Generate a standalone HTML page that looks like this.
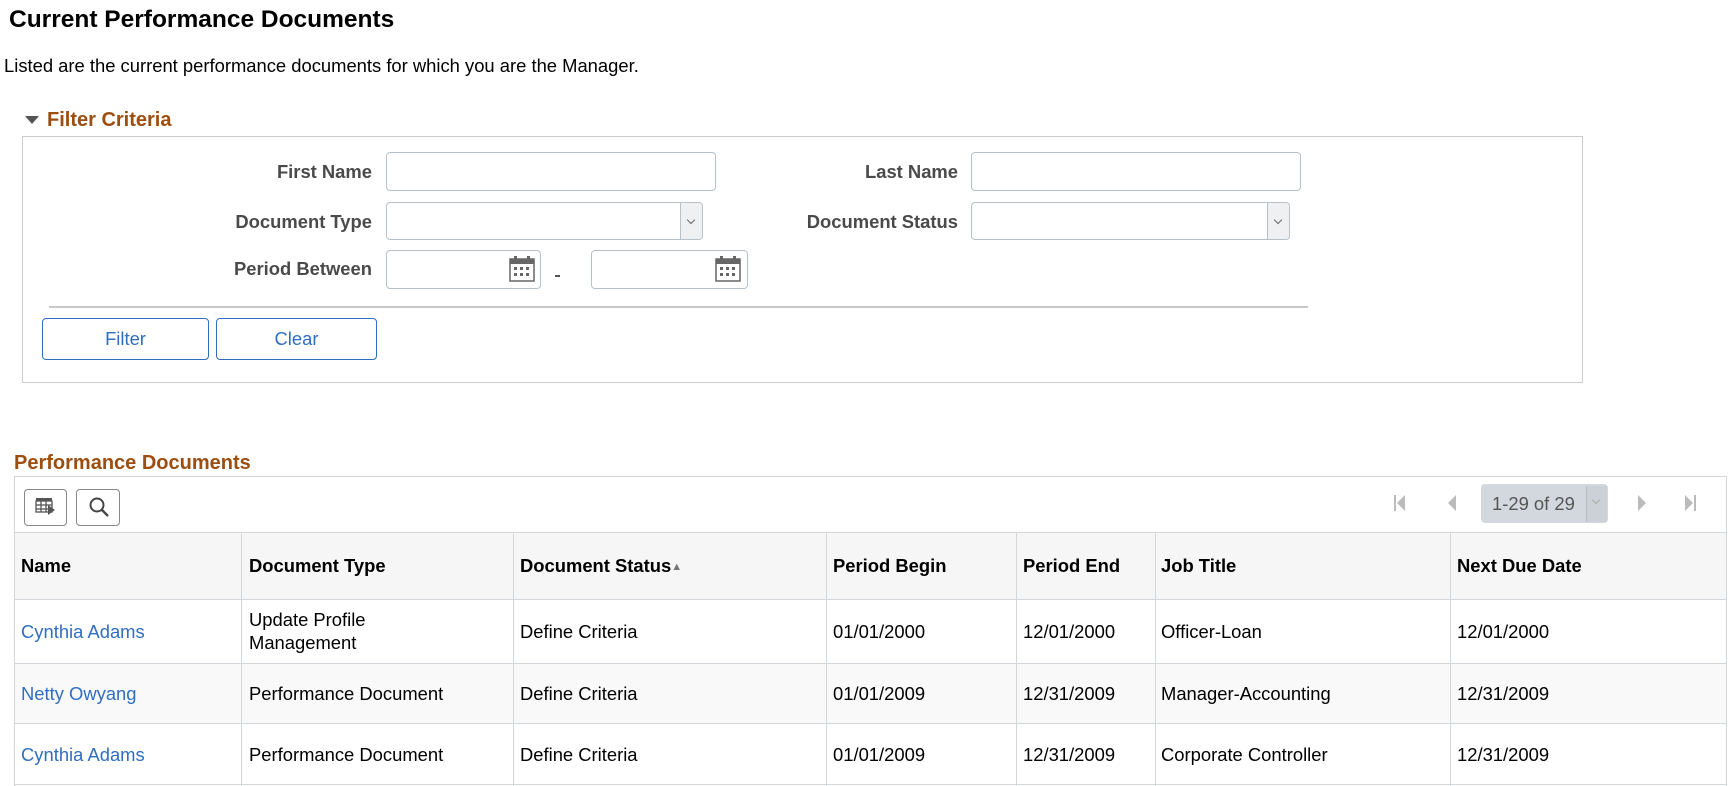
<!DOCTYPE html>
<html><head><meta charset="utf-8"><style>
*{box-sizing:border-box;margin:0;padding:0}
html,body{width:1729px;height:786px;overflow:hidden}
body{background:#fff;font-family:"Liberation Sans",Arial,sans-serif;color:#000;position:relative}
.a{position:absolute;white-space:nowrap}
.lbl{font-weight:bold;color:#4a4a4a;font-size:18.4px;text-align:right}
.inp{position:absolute;border:1px solid #b8c0c8;border-radius:4px;background:#fff}
.dd{position:absolute;right:0;top:0;bottom:0;width:22px;border-left:1px solid #b8c0c8;background:#eef0f2;border-radius:0 4px 4px 0}
.dd:after{content:"";position:absolute;left:7px;top:14px;width:5px;height:5px;border-right:1.5px solid #666;border-bottom:1.5px solid #666;transform:rotate(45deg)}
.btn{position:absolute;border:1px solid #2f6ec0;border-radius:4px;color:#2f6ec0;font-size:18.4px;text-align:center;line-height:39px;background:#fff}
.h{position:absolute;color:#9c4e10;font-weight:bold;font-size:20px}
.vl{position:absolute;top:533px;height:253px;width:1px;background:#d3d7dc}
.hl{position:absolute;left:14px;width:1712px;height:1px;background:#d3d7dc}
.th{position:absolute;top:533px;font-weight:bold;font-size:18.4px;line-height:66px}
.td{position:absolute;font-size:18.4px}
.lk{color:#2f6ec0}
</style></head><body>
<div class="a" style="left:9px;top:6px;font-size:24.5px;font-weight:bold">Current Performance Documents</div>
<div class="a" style="left:4px;top:55px;font-size:18.4px">Listed are the current performance documents for which you are the Manager.</div>

<div class="a" style="left:25px;top:116px;width:0;height:0;border-left:7px solid transparent;border-right:7px solid transparent;border-top:8px solid #555"></div>
<div class="h" style="left:47px;top:109px">Filter Criteria</div>
<div class="a" style="left:22px;top:136px;width:1561px;height:247px;border:1px solid #ccc"></div>

<div class="a lbl" style="right:1357px;top:161px">First Name</div>
<div class="inp" style="left:386px;top:152px;width:330px;height:39px"></div>
<div class="a lbl" style="right:771px;top:161px">Last Name</div>
<div class="inp" style="left:971px;top:152px;width:330px;height:39px"></div>

<div class="a lbl" style="right:1357px;top:211px">Document Type</div>
<div class="inp" style="left:386px;top:202px;width:317px;height:38px"><div class="dd"></div></div>
<div class="a lbl" style="right:771px;top:211px">Document Status</div>
<div class="inp" style="left:971px;top:202px;width:319px;height:38px"><div class="dd"></div></div>

<div class="a lbl" style="right:1357px;top:258px">Period Between</div>
<div class="inp" style="left:386px;top:250px;width:155px;height:39px"></div>
<div class="a" style="left:555px;top:275px;width:5px;height:2px;background:#555"></div>
<div class="inp" style="left:591px;top:250px;width:157px;height:39px"></div>
<svg class="a" style="left:509px;top:256px" width="26" height="26" viewBox="0 0 26 26"><rect x="1" y="3" width="24" height="22" fill="#fff" stroke="#666" stroke-width="1.5"/><rect x="1" y="3" width="24" height="5" fill="#666"/><rect x="5" y="0" width="3" height="5" fill="#666"/><rect x="18" y="0" width="3" height="5" fill="#666"/><g fill="#666"><rect x="5" y="11" width="3" height="3"/><rect x="11" y="11" width="3" height="3"/><rect x="17" y="11" width="3" height="3"/><rect x="5" y="17" width="3" height="3"/><rect x="11" y="17" width="3" height="3"/><rect x="17" y="17" width="3" height="3"/></g></svg>
<svg class="a" style="left:715px;top:256px" width="26" height="26" viewBox="0 0 26 26"><rect x="1" y="3" width="24" height="22" fill="#fff" stroke="#666" stroke-width="1.5"/><rect x="1" y="3" width="24" height="5" fill="#666"/><rect x="5" y="0" width="3" height="5" fill="#666"/><rect x="18" y="0" width="3" height="5" fill="#666"/><g fill="#666"><rect x="5" y="11" width="3" height="3"/><rect x="11" y="11" width="3" height="3"/><rect x="17" y="11" width="3" height="3"/><rect x="5" y="17" width="3" height="3"/><rect x="11" y="17" width="3" height="3"/><rect x="17" y="17" width="3" height="3"/></g></svg>
<div class="a" style="left:49px;top:306px;width:1259px;height:2px;background:#c8c8c8"></div>
<div class="btn" style="left:42px;top:318px;width:167px;height:42px">Filter</div>
<div class="btn" style="left:216px;top:318px;width:161px;height:42px">Clear</div>

<div class="h" style="left:14px;top:452px">Performance Documents</div>
<div class="a" style="left:14px;top:476px;width:1713px;height:310px;border:1px solid #d3d7dc;border-bottom:none"></div>
<div class="a" style="left:24px;top:489px;width:43px;height:37px;border:1px solid #888;border-radius:4px"></div>
<svg class="a" style="left:35px;top:497px" width="22" height="20" viewBox="0 0 22 20"><rect x="1" y="1" width="16" height="3" fill="#555"/><g stroke="#555" stroke-width="1.3" fill="none"><rect x="1" y="4" width="16" height="11"/><line x1="1" y1="8" x2="17" y2="8"/><line x1="1" y1="12" x2="17" y2="12"/><line x1="6" y1="4" x2="6" y2="15"/><line x1="11" y1="4" x2="11" y2="15"/></g><path d="M13 8 L20 13 L13 18 Z" fill="#555"/></svg>
<div class="a" style="left:76px;top:489px;width:44px;height:37px;border:1px solid #888;border-radius:4px"></div>
<svg class="a" style="left:88px;top:496px" width="22" height="22" viewBox="0 0 22 22"><circle cx="9" cy="9" r="6.5" fill="none" stroke="#444" stroke-width="2"/><line x1="14" y1="14" x2="20" y2="20" stroke="#444" stroke-width="2.3"/></svg>

<svg class="a" style="left:1393px;top:494px" width="14" height="18" viewBox="0 0 14 18"><rect x="1" y="1" width="2" height="16" fill="#bbb"/><path d="M12 1 L4 9 L12 17Z" fill="#bbb"/></svg>
<svg class="a" style="left:1446px;top:494px" width="12" height="18" viewBox="0 0 12 18"><path d="M10 1 L2 9 L10 17Z" fill="#bbb"/></svg>
<div class="a" style="left:1481px;top:484px;width:127px;height:39px;background:#d3d8de;border-radius:4px;color:#555;font-size:18.4px;line-height:39px;padding-left:11px">1-29 of 29</div>
<div class="a" style="left:1586px;top:486px;width:21px;height:36px;border-left:1px solid #bbb;background:#ccd1d7"></div>
<div class="a" style="left:1593px;top:497px;width:6px;height:6px;border-right:1.3px solid #aaa;border-bottom:1.3px solid #aaa;transform:rotate(45deg)"></div>
<svg class="a" style="left:1636px;top:494px" width="12" height="18" viewBox="0 0 12 18"><path d="M2 1 L10 9 L2 17Z" fill="#bbb"/></svg>
<svg class="a" style="left:1683px;top:494px" width="14" height="18" viewBox="0 0 14 18"><path d="M2 1 L10 9 L2 17Z" fill="#bbb"/><rect x="11" y="1" width="2" height="16" fill="#bbb"/></svg>

<div class="a" style="left:15px;top:533px;width:1711px;height:66px;background:#f6f6f6"></div>
<div class="a" style="left:15px;top:663px;width:1711px;height:60px;background:#f9f9f9"></div>
<div class="hl" style="top:532px"></div>
<div class="hl" style="top:599px"></div>
<div class="hl" style="top:663px"></div>
<div class="hl" style="top:723px"></div>
<div class="hl" style="top:784px"></div>
<div class="vl" style="left:241px"></div>
<div class="vl" style="left:513px"></div>
<div class="vl" style="left:826px"></div>
<div class="vl" style="left:1016px"></div>
<div class="vl" style="left:1155px"></div>
<div class="vl" style="left:1450px"></div>

<div class="th" style="left:21px">Name</div>
<div class="th" style="left:249px">Document Type</div>
<div class="th" style="left:520px">Document Status<span style="font-size:11px;color:#777;vertical-align:2px">&#9650;</span></div>
<div class="th" style="left:833px">Period Begin</div>
<div class="th" style="left:1023px">Period End</div>
<div class="th" style="left:1161px">Job Title</div>
<div class="th" style="left:1457px">Next Due Date</div>

<div class="td lk" style="left:21px;top:621px">Cynthia Adams</div>
<div class="td" style="left:249px;top:608px;line-height:23px">Update Profile<br>Management</div>
<div class="td" style="left:520px;top:621px">Define Criteria</div>
<div class="td" style="left:833px;top:621px">01/01/2000</div>
<div class="td" style="left:1023px;top:621px">12/01/2000</div>
<div class="td" style="left:1161px;top:621px">Officer-Loan</div>
<div class="td" style="left:1457px;top:621px">12/01/2000</div>

<div class="td lk" style="left:21px;top:683px">Netty Owyang</div>
<div class="td" style="left:249px;top:683px">Performance Document</div>
<div class="td" style="left:520px;top:683px">Define Criteria</div>
<div class="td" style="left:833px;top:683px">01/01/2009</div>
<div class="td" style="left:1023px;top:683px">12/31/2009</div>
<div class="td" style="left:1161px;top:683px">Manager-Accounting</div>
<div class="td" style="left:1457px;top:683px">12/31/2009</div>

<div class="td lk" style="left:21px;top:744px">Cynthia Adams</div>
<div class="td" style="left:249px;top:744px">Performance Document</div>
<div class="td" style="left:520px;top:744px">Define Criteria</div>
<div class="td" style="left:833px;top:744px">01/01/2009</div>
<div class="td" style="left:1023px;top:744px">12/31/2009</div>
<div class="td" style="left:1161px;top:744px">Corporate Controller</div>
<div class="td" style="left:1457px;top:744px">12/31/2009</div>
</body></html>
